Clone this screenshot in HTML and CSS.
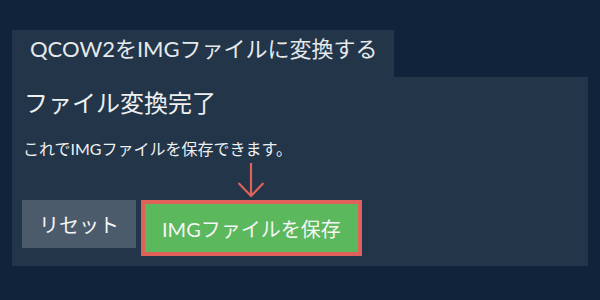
FILE: index.html
```html
<!DOCTYPE html>
<html lang="ja">
<head>
  <meta charset="UTF-8" />
  <meta name="viewport" content="width=device-width, initial-scale=1.0"/>
  <title>QCOW2をIMGファイルに変換する</title>
  <link rel="stylesheet" href="styles.css">
</head>
<body>

  <div class="wrap">
    <div class="tab">QCOW2をIMGファイルに変換する</div>

    <div class="panel">
      <h2>ファイル変換完了</h2>
      <p class="note">これでIMGファイルを保存できます。</p>

      <div class="actions">
        <button class="btn btn-reset">リセット</button>
        <div class="save-wrap">
          <svg class="arrow" width="30" height="36" viewBox="0 0 30 36">
            <path d="M14 1 L14 34 M1.5 21 L14 34 L26.5 21" fill="none" stroke="#e0605a" stroke-width="2.2"/>
          </svg>
          <button class="btn btn-save">IMGファイルを保存</button>
        </div>
      </div>
    </div>
  </div>

</body>
</html>
```

FILE: styles.css
```css
:root {
  --bg: #10233a;
  --panel: #223549;
  --text: #eef0f2;
  --reset: #4b5b6b;
  --green: #5cb85c;
  --red: #e0605a;
}

body {
  margin: 0;
  background-color: var(--bg);
  color: var(--text);
  font-family: Lato, "Noto Sans CJK JP", sans-serif;
}

.wrap {
  padding: 30px 12px 0;
}

.tab {
  display: inline-block;
  background-color: var(--panel);
  height: 47px;
  line-height: 38px;
  padding: 0 16px 0 18px;
  font-size: 22px;
  color: #e6e9ec;
}

.panel {
  background-color: var(--panel);
  padding: 10px 10px 10px;
}

.panel h2 {
  margin: 0;
  font-size: 24px;
  font-weight: normal;
  line-height: 32px;
  padding-left: 2px;
}

.note {
  margin: 19px 0 0;
  font-size: 16px;
  line-height: 22px;
  padding-left: 1px;
}

.actions {
  display: flex;
  align-items: flex-start;
  gap: 5px;
  margin-top: 40px;
}

.btn {
  height: 48px;
  padding: 0 17px;
  font-family: inherit;
  font-size: 20px;
  color: #f4f5f6;
  border: none;
  cursor: pointer;
}

.btn-reset {
  background: var(--reset);
}

.save-wrap {
  position: relative;
}

.btn-save {
  background: var(--green);
  border: 4px solid var(--red);
  height: 56px;
}

.arrow {
  position: absolute;
  left: 50%;
  top: -38px;
  margin-left: -14px;
}
```
